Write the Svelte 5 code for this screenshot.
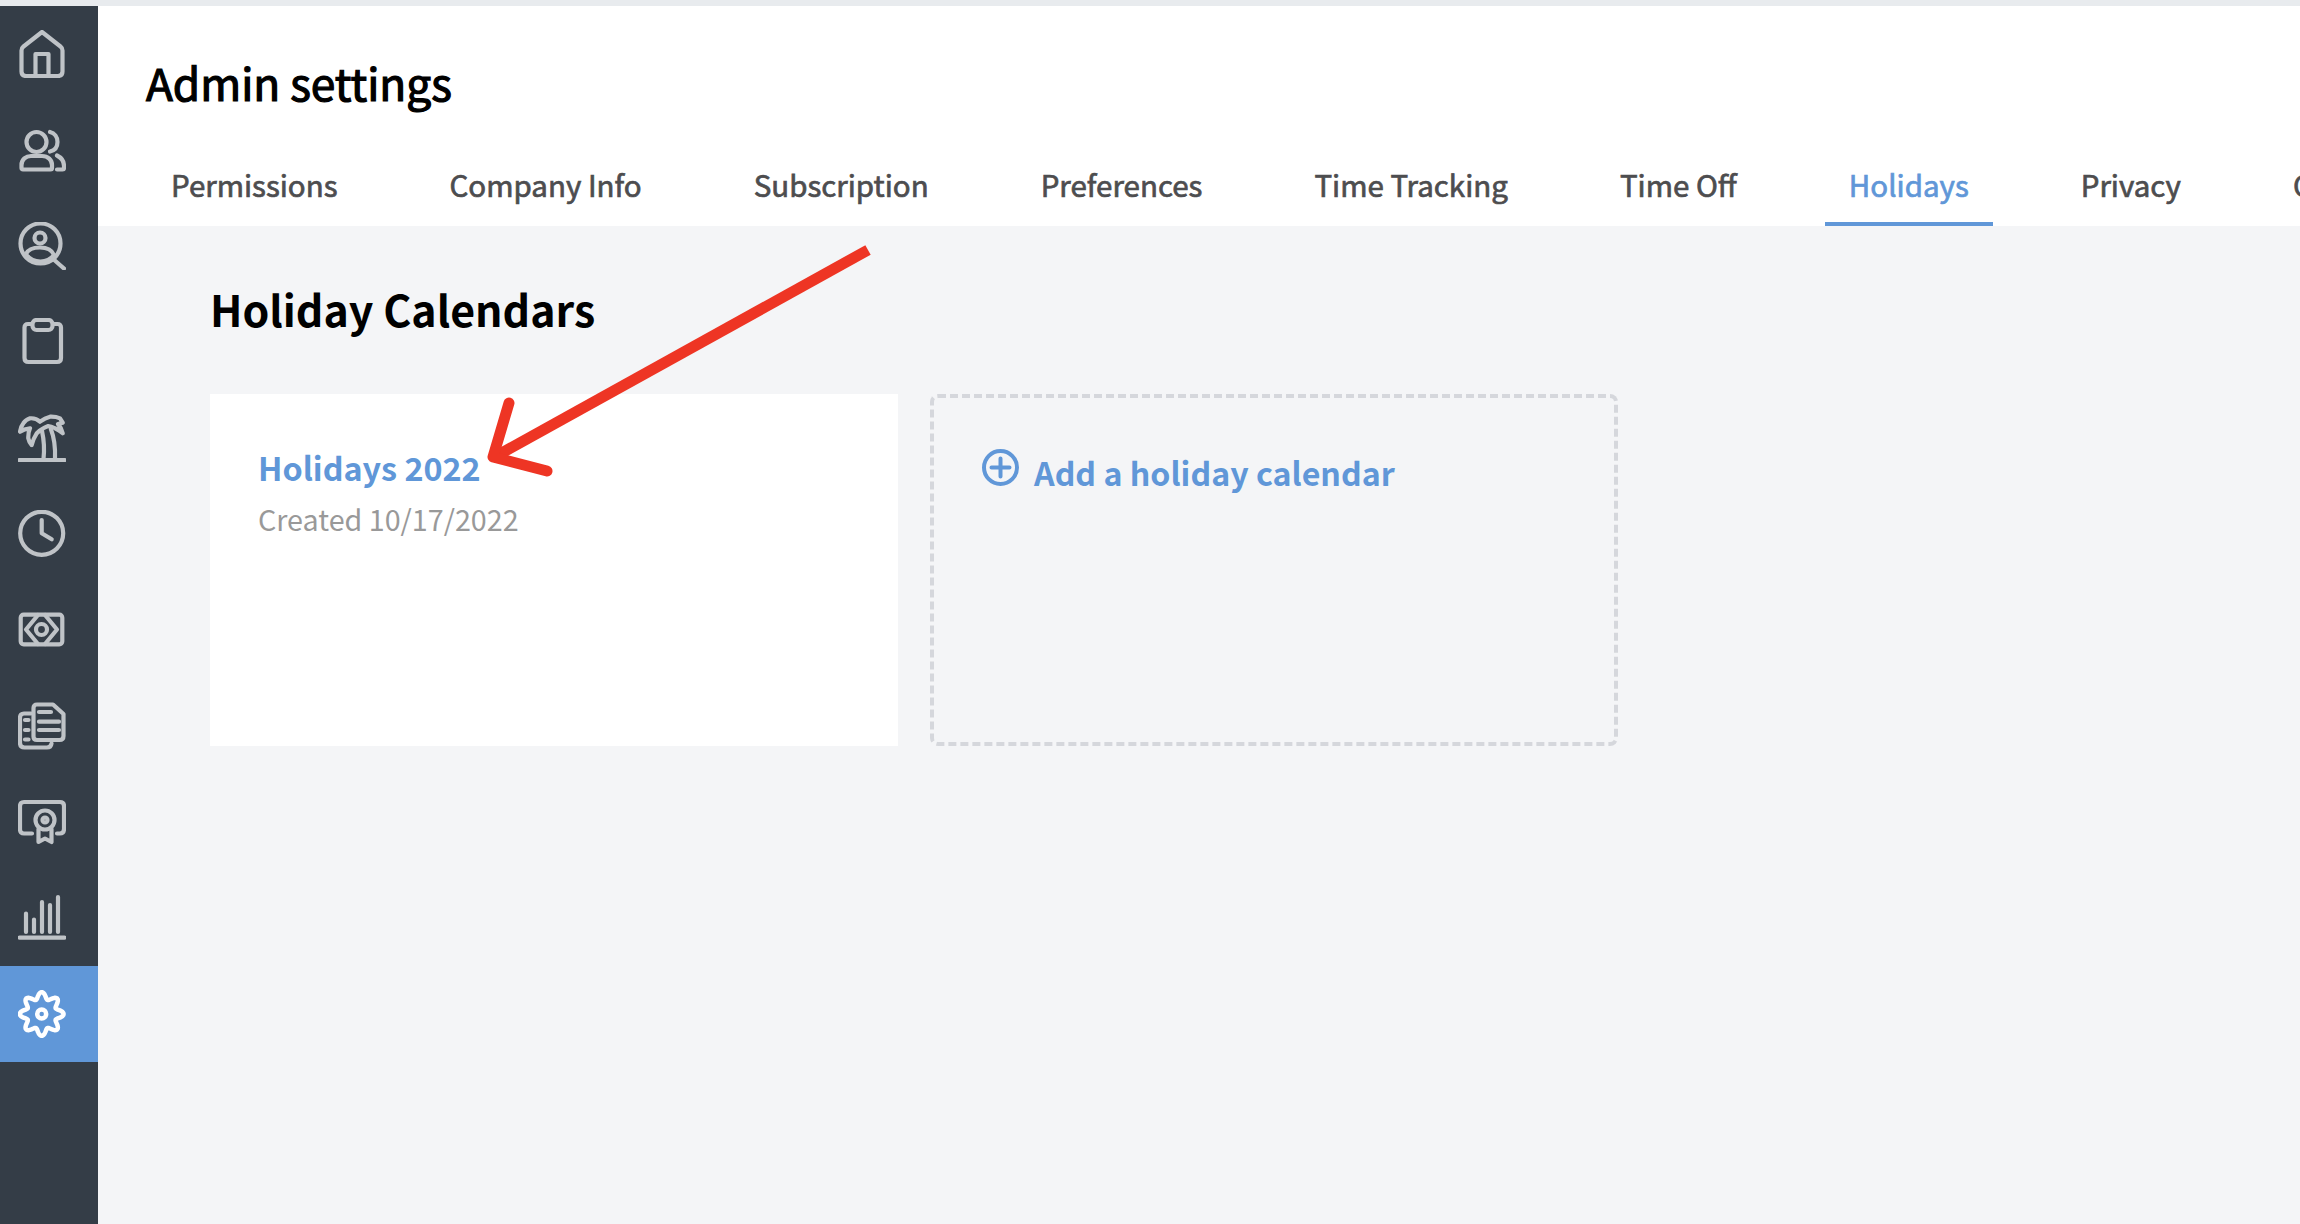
<script>
  const gearPoints = [];
  for (let i = 0; i < 128; i++) {
    const t = (i / 128) * Math.PI * 2;
    const r = 18.5 + 3.4 * Math.cos(8 * t);
    gearPoints.push(`${(23.7 + r * Math.sin(t)).toFixed(2)},${(24 - r * Math.cos(t)).toFixed(2)}`);
  }
  const gear = 'M' + gearPoints.join('L') + 'Z';
  const tabs = ['Permissions', 'Company Info', 'Subscription', 'Preferences', 'Time Tracking', 'Time Off', 'Holidays', 'Privacy', 'Compliance'];
</script>

<div class="page">
  <div class="strip"></div>
  <div class="row">
    <nav class="side">
      <a class="item"><svg viewBox="0 0 48 48"><path d="M24 2 5.5 16.5Q3.500 18 3.500 20.500V41.500Q3.500 46 8 46H40Q44.500 46 44.500 41.500V20.500Q44.500 18 42.500 16.500Z"/><path d="M17.500 46V24H30.500V46"/></svg></a>
      <a class="item"><svg viewBox="0 0 48 48"><circle cx="18.500" cy="16" r="10"/><path d="M3.500 42V39C3.500 33.500 8 30 13 30H24C30 30 34 34 34 39V42Q34 43.500 32.500 43.500H5Q3.500 43.500 3.500 42Z"/><path d="M32 6C36.500 7 39.500 11 39.500 16S36.500 24.500 32 25.500"/><path d="M39 29.500C43 31.500 46 35 46 40V42Q46 43.500 44.500 43.500H39"/></svg></a>
      <a class="item"><svg viewBox="0 0 48 48"><circle cx="22.500" cy="21.500" r="20"/><circle cx="22" cy="16" r="5.500"/><path d="M8 32C10 27.500 15 25.500 22 25.500S34 28 36 33C33 37 28 39.500 22.500 39.500 16 39.500 11 37 8 32Z"/><path d="M34 36 46 46.500"/></svg></a>
      <a class="item"><svg viewBox="0 0 48 48"><path d="M14 6H10Q6.500 6 6.500 9.500V40Q6.500 44 10.500 44H39Q43 44 43 40V9.500Q43 6 39.500 6H35"/><rect x="14.500" y="2" width="20" height="10" rx="4"/></svg></a>
      <a class="item"><svg viewBox="0 0 48 48"><path d="M1.500 46H46.500"/><path d="M2 17.700Q3 12 5.300 9.300 8 5.500 12 4.300 18 3.800 22 7.700 27 3.800 32 2.700 38 2.500 42 4.300L44.700 8.700 40 10Q43.500 14 44.700 19.300 41 16 37 14.300 33 12 30.300 12 27.500 13 25.300 14.300 21 16.500 18.700 19.300 15 25 13.700 31 11 28 10.300 24.300 10 19 12 14.300 6 15 2 17.700Z"/><path d="M25.500 45C26.500 36 26 26 24 17"/><path d="M37 45C37.500 34 36 23 32.700 14.500"/></svg></a>
      <a class="item"><svg viewBox="0 0 48 48"><circle cx="23.700" cy="23.300" r="21.500"/><path d="M23.700 10V23.300L33.700 29.300"/></svg></a>
      <a class="item"><svg viewBox="0 0 48 48"><rect x="2.700" y="8.700" width="41.600" height="29.600" rx="3"/><circle cx="23.500" cy="23.500" r="5.500"/><path d="M20 9 8 23.500 20 38"/><path d="M27 9 39 23.500 27 38"/></svg></a>
      <a class="item"><svg viewBox="0 0 48 48"><path d="M15.500 6Q15.500 2.500 19 2.500H35L45.500 12V34Q45.500 38 41.500 38H19Q15.500 38 15.500 34.500Z"/><path d="M21 10H33M21 19.700H41M21 28H41"/><path d="M13 11.500H6Q2 11.500 2 15.500V41Q2 45.500 6.500 45.500H29Q33 45.500 33.500 41.500"/><path d="M7 18H10.500M7 28H10.500M7 37.500H10.500"/></svg></a>
      <a class="item"><svg viewBox="0 0 48 48"><path d="M14 35.500H6Q2 35.500 2 31.500V8Q2 4 6 4H42Q46 4 46 8V31Q46 35.500 42 35.500H39"/><circle cx="27" cy="22" r="9.500"/><circle cx="27" cy="22" r="2.500"/><path d="M20.500 31V44L27 40.500 33.500 44V31"/></svg></a>
      <a class="item"><svg viewBox="0 0 48 48"><path d="M1.500 43.700H46.500"/><path d="M8 19.500V38M16 25.500V38M24 8V38M32 11V38M40 3V38"/></svg></a>
      <a class="item active"><svg viewBox="0 0 48 48"><path d={gear}/><circle cx="23.700" cy="24" r="4.500"/></svg></a>
    </nav>
    <main class="main">
      <header class="head">
        <h1>Admin settings</h1>
        <ul class="tabs">
          {#each tabs as t}
            <li class:on={t === 'Holidays'}>{t}</li>
          {/each}
        </ul>
      </header>
      <section class="content">
        <h2>Holiday Calendars</h2>
        <div class="cards">
          <div class="card">
            <div class="name">Holidays 2022</div>
            <div class="date">Created 10/17/2022</div>
          </div>
          <div class="add">
            <svg viewBox="0 0 37 37"><circle cx="18.500" cy="18.500" r="16.500"/><path d="M18.500 9.500V27.500M9.500 18.500H27.500"/></svg>
            <span>Add a holiday calendar</span>
          </div>
        </div>
      </section>
    </main>
  </div>
  <svg class="arrow" viewBox="0 0 2300 1224"><path d="M868 250 498 455"/><path d="M509 403 493 457 547 471"/></svg>
</div>

<style>
  :global(body) { margin: 0; overflow: hidden; }
  .page {
    position: relative;
    width: 2300px;
    height: 1224px;
    overflow: hidden;
    display: flex;
    flex-direction: column;
    font-family: "Noto Sans CJK JP", "Noto Sans", sans-serif;
    background: #f4f5f7;
  }
  .strip { height: 6px; background: #e8ebee; flex: none; }
  .row { flex: 1; display: flex; min-height: 0; }
  .side { width: 98px; flex: none; background: #343d47; }
  .item { display: flex; align-items: center; height: 96px; padding-left: 18px; box-sizing: border-box; }
  .item svg { width: 48px; height: 48px; fill: none; stroke: #bfc3c7; stroke-width: 4.2; stroke-linecap: round; stroke-linejoin: round; }
  .item.active { background: #6097d8; }
  .item.active svg { stroke: #fff; stroke-width: 4.5; }
  .main { flex: 1; min-width: 0; display: flex; flex-direction: column; }
  .head { height: 220px; flex: none; background: #fff; box-sizing: border-box; padding-top: 47px; display: flex; flex-direction: column; justify-content: space-between; }
  h1 { margin: 0 0 0 48px; font-size: 44.200px; line-height: 58px; font-weight: 400; color: #000; -webkit-text-stroke: 1.200px #000; }
  .tabs { list-style: none; display: flex; gap: 64px; margin: 0 0 0 49px; padding: 0; white-space: nowrap; }
  .tabs li { padding: 0 24px 15px; font-size: 29.500px; line-height: 46px; font-weight: 400; color: #4d4d4f; -webkit-text-stroke: 0.7px currentColor; border-bottom: 4px solid transparent; }
  .tabs li.on { color: #6097d8; border-bottom-color: #6097d8; }
  .content { flex: 1; padding: 52px 0 0 112px; }
  h2 { margin: 0; font-size: 42.900px; line-height: 60px; font-weight: 700; color: #000; }
  .cards { display: flex; gap: 32px; margin-top: 56px; }
  .card, .add { width: 688px; height: 352px; box-sizing: border-box; }
  .card { background: #fff; padding: 49px 48px; }
  .name { font-size: 32.300px; line-height: 48px; font-weight: 700; color: #6097d8; }
  .date { font-size: 28.700px; line-height: 46px; font-weight: 400; color: #999; margin-top: 5px; }
  .add { border: 4px dashed #d5d7dc; border-radius: 8px; padding: 51px 0 0 48px; display: flex; align-items: flex-start; gap: 15px; }
  .add svg { width: 37px; height: 37px; flex: none; fill: none; stroke: #6097d8; stroke-width: 4; stroke-linecap: round; }
  .add span { font-size: 32.200px; line-height: 48px; font-weight: 700; color: #6097d8; margin-top: -1px; }
  .arrow { position: absolute; inset: 0; width: 2300px; height: 1224px; fill: none; stroke: #ee3524; stroke-width: 11; pointer-events: none; }
  .arrow path:last-child { stroke-linecap: round; stroke-linejoin: round; }
</style>
